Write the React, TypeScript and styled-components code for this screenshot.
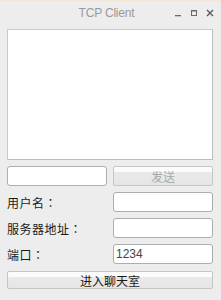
import React from "react";
import styled, { createGlobalStyle } from "styled-components";

const Global = createGlobalStyle`
  html, body { margin: 0; padding: 0; background: #ededed; }
  body { font-family: "Noto Sans CJK SC", "Liberation Sans", sans-serif; }
`;

const Window = styled.div`
  width: 221px;
  height: 300px;
  background: #ededed;
  display: flex;
  flex-direction: column;
  box-sizing: border-box;
  overflow: hidden;
`;

const TitleBar = styled.div`
  height: 24px;
  display: grid;
  grid-template-columns: 1fr auto 1fr;
  align-items: center;
  padding: 0 7px 0 7px;
  box-sizing: border-box;
  border-top: 1px solid #f1e6d8;
`;

const Title = styled.div`
  grid-column: 2;
  font-family: "Liberation Sans", Arial, sans-serif;
  font-size: 12px;
  color: #9a9a9a;
  letter-spacing: -0.2px;
  margin-right: 8px;
`;

const Controls = styled.div`
  grid-column: 3;
  justify-self: end;
  display: flex;
  align-items: center;
  gap: 8px;
  color: #777;
`;

const Content = styled.div`
  display: flex;
  flex-direction: column;
  padding: 5px 8px 0 7px;
`;

const Output = styled.div`
  height: 129px;
  background: #fff;
  border: 1px solid #c9c9c9;
  border-right-color: #bdbdbd;
  border-bottom-color: #bdbdbd;
`;

const Row = styled.div<{ $mt: number }>`
  display: flex;
  align-items: center;
  justify-content: space-between;
  margin-top: ${(p) => p.$mt}px;
`;

const Input = styled.div<{ $w: number }>`
  width: ${(p) => p.$w}px;
  height: 20px;
  box-sizing: border-box;
  background: #fff;
  border: 1px solid #adadad;
  border-radius: 3px;
  font-family: "Liberation Sans", Arial, sans-serif;
  font-size: 12px;
  color: #444;
  display: flex;
  align-items: center;
  padding-left: 2px;
`;

const Button = styled.div<{ $w?: number; $disabled?: boolean; $h?: number }>`
  width: ${(p) => (p.$w ? `${p.$w}px` : "100%")};
  height: ${(p) => p.$h ?? 20}px;
  box-sizing: border-box;
  border: 1px solid #c6c6c6;
  border-radius: 2px;
  background: linear-gradient(#fbfbfb 0, #fbfbfb 30%, #e9e9e9 30%, #e6e6e6 100%);
  display: flex;
  align-items: center;
  justify-content: center;
  font-size: 12px;
  color: ${(p) => (p.$disabled ? "#a8a8a8" : "#1a1a1a")};
`;

const Label = styled.div`
  font-size: 12px;
  color: #1a1a1a;
  letter-spacing: 0.5px;
  padding-top: 1px;
`;

const Colon = styled.span`
  font-family: "Noto Sans CJK JP", sans-serif;
`;

function Icons() {
  return (
    <Controls>
      <svg width="8" height="8" viewBox="0 0 8 8">
        <rect x="1" y="6" width="6" height="1.3" fill="#6a6a6a" />
      </svg>
      <svg width="8" height="8" viewBox="0 0 8 8">
        <rect x="1.5" y="1.5" width="5" height="5" fill="none" stroke="#6a6a6a" strokeWidth="1" />
        <rect x="1.5" y="1.5" width="5" height="1" fill="#6a6a6a" />
      </svg>
      <svg width="8" height="8" viewBox="0 0 8 8">
        <path d="M1 1 L7 7 M7 1 L1 7" stroke="#5a5a5a" strokeWidth="1.4" />
      </svg>
    </Controls>
  );
}

export default function App() {
  return (
    <Window>
      <Global />
      <TitleBar>
        <Title>TCP Client</Title>
        <Icons />
      </TitleBar>
      <Content>
        <Output />
        <Row $mt={6}>
          <Input $w={100} />
          <Button $w={100} $disabled>发送</Button>
        </Row>
        <Row $mt={6}>
          <Label>用户名<Colon>：</Colon></Label>
          <Input $w={100} />
        </Row>
        <Row $mt={6}>
          <Label>服务器地址<Colon>：</Colon></Label>
          <Input $w={100} />
        </Row>
        <Row $mt={6}>
          <Label>端口<Colon>：</Colon></Label>
          <Input $w={100}>1234</Input>
        </Row>
        <Row $mt={7}>
          <Button $h={18}>进入聊天室</Button>
        </Row>
      </Content>
    </Window>
  );
}
